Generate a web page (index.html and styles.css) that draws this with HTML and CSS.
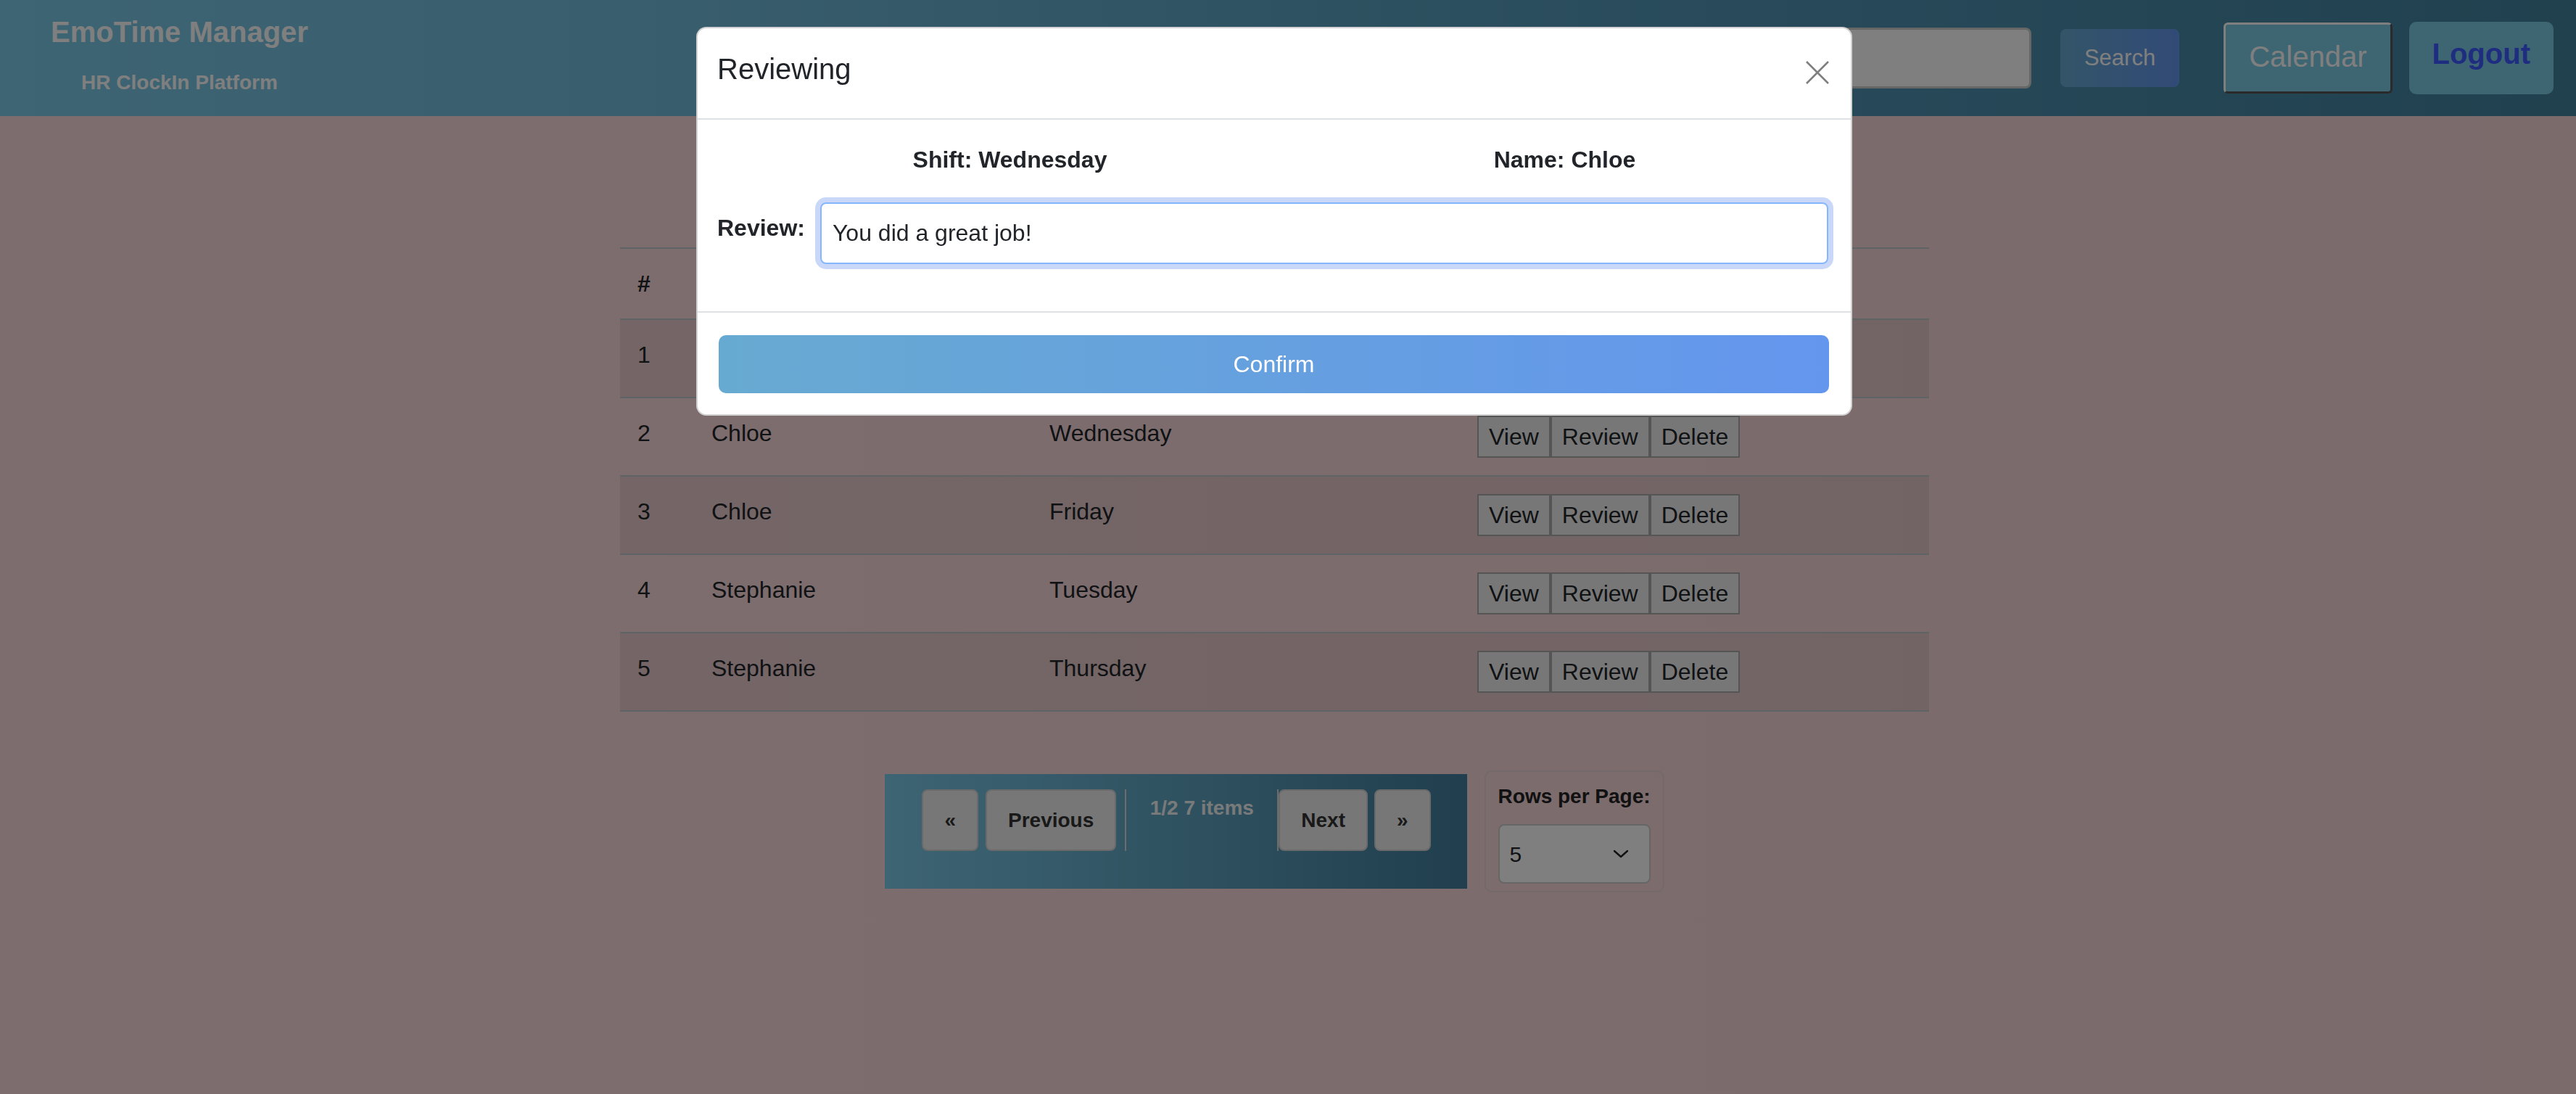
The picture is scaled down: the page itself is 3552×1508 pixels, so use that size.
FILE: index.html
```html
<!DOCTYPE html>
<html lang="en">
<head>
<meta charset="utf-8">
<title>EmoTime Manager</title>
<link rel="stylesheet" href="styles.css">
</head>
<body>
<header class="topbar">
  <div class="brand">
    <div class="brand-title">EmoTime Manager</div>
    <div class="brand-sub">HR ClockIn Platform</div>
  </div>
  <div class="nav-right">
    <input class="search-input" type="text" aria-label="Search">
    <button class="btn-search">Search</button>
    <button class="btn-calendar">Calendar</button>
    <button class="btn-logout">Logout</button>
  </div>
</header>

<main class="content">
  <div class="main">
    <table class="shifts">
      <colgroup>
        <col class="c-num"><col class="c-name"><col class="c-shift"><col class="c-act">
      </colgroup>
      <thead>
        <tr><th>#</th><th>Name</th><th>Shift</th><th>Actions</th></tr>
      </thead>
      <tbody>
        <tr><td>1</td><td>Chloe</td><td>Monday</td><td><div class="acts"><button class="act">View</button><button class="act">Review</button><button class="act">Delete</button></div></td></tr>
        <tr><td>2</td><td>Chloe</td><td>Wednesday</td><td><div class="acts"><button class="act">View</button><button class="act">Review</button><button class="act">Delete</button></div></td></tr>
        <tr><td>3</td><td>Chloe</td><td>Friday</td><td><div class="acts"><button class="act">View</button><button class="act">Review</button><button class="act">Delete</button></div></td></tr>
        <tr><td>4</td><td>Stephanie</td><td>Tuesday</td><td><div class="acts"><button class="act">View</button><button class="act">Review</button><button class="act">Delete</button></div></td></tr>
        <tr><td>5</td><td>Stephanie</td><td>Thursday</td><td><div class="acts"><button class="act">View</button><button class="act">Review</button><button class="act">Delete</button></div></td></tr>
      </tbody>
    </table>

    <div class="pager-row">
      <div class="pager">
        <button class="pg-btn pg-first">&laquo;</button>
        <button class="pg-btn pg-prev">Previous</button>
        <div class="pg-info">1/2 7 items</div>
        <button class="pg-btn pg-next">Next</button>
        <button class="pg-btn">&raquo;</button>
      </div>
      <div class="rows-box">
        <label class="rows-label" for="rows">Rows per Page:</label>
        <div class="select-wrap">
          <select id="rows" class="rows-select"><option>5</option><option>10</option></select>
          <svg class="chev" width="22" height="12" viewBox="0 0 22 12" aria-hidden="true"><polyline points="2,2 11,10 20,2" fill="none" stroke="#222" stroke-width="2.4" stroke-linecap="round" stroke-linejoin="round"/></svg>
        </div>
      </div>
    </div>
  </div>
</main>

<div class="backdrop"></div>
<div class="modal-layer">
  <div class="modal">
    <div class="modal-header">
      <h5 class="modal-title">Reviewing</h5>
      <button class="btn-close" aria-label="Close">
        <svg width="34" height="34" viewBox="0 0 34 34" aria-hidden="true"><path d="M2 2 L32 32 M32 2 L2 32" stroke="#000" stroke-opacity="0.5" stroke-width="2.6" fill="none"/></svg>
      </button>
    </div>
    <div class="modal-body">
      <div class="info-row">
        <div class="info-cell">Shift: Wednesday</div>
        <div class="info-cell">Name: Chloe</div>
      </div>
      <div class="review-row">
        <label class="review-label" for="review">Review:</label>
        <input id="review" class="review-input" type="text" value="You did a great job!">
      </div>
    </div>
    <div class="modal-footer">
      <button class="btn-confirm">Confirm</button>
    </div>
  </div>
</div>
</body>
</html>
```

FILE: styles.css
```css
* { box-sizing: border-box; }

html, body {
  margin: 0;
  padding: 0;
}

body {
  font-family: "Liberation Sans", Arial, sans-serif;
  color: #212529;
  background: linear-gradient(to right, #fcdbdd, #f6d6d7);
  min-height: 100vh;
}

button, input, select {
  font-family: "Liberation Sans", Arial, sans-serif;
}

/* ---------- top bar ---------- */
.topbar {
  height: 160px;
  display: flex;
  align-items: center;
  justify-content: space-between;
  padding: 0 31px 0 70px;
  background: linear-gradient(to right, #7ccae8 0%, #72bcda 25%, #5094b4 68%, #42829e 100%);
}

.brand {
  display: flex;
  flex-direction: column;
  align-items: center;
  color: #fff;
  font-weight: bold;
  align-self: flex-start;
  padding-top: 20px;
}

.brand-title {
  font-size: 40px;
  line-height: 48px;
}

.brand-sub {
  font-size: 28px;
  line-height: 31px;
  margin-top: 30px;
}

.nav-right {
  display: flex;
  align-items: center;
}

.search-input {
  width: 380px;
  height: 84px;
  border: 3px solid #cccccc;
  border-radius: 8px;
  background: #fff;
  margin-right: 40px;
}

.btn-search {
  height: 80px;
  padding: 0 33px;
  border: none;
  border-radius: 8px;
  background: linear-gradient(to right, #67aad1, #6496ee);
  color: #fff;
  font-size: 31px;
  margin-right: 61px;
}

.btn-calendar {
  height: 98px;
  padding: 0 32px 4px;
  border: 3px solid;
  border-color: #ffffff #555555 #555555 #ffffff;
  border-radius: 6px;
  background: #7ccce4;
  color: #fff;
  font-size: 40px;
  margin-right: 23px;
}

.btn-logout {
  height: 100px;
  padding: 0 32px 12px;
  border: none;
  border-radius: 10px;
  background: #7ccce4;
  color: #3c5aff;
  font-size: 40px;
  font-weight: bold;
}

/* ---------- main content ---------- */
.content {
  padding-right: 37px;
}

.main {
  width: 1805px;
  margin: 181px auto 0;
}

.shifts {
  width: 1805px;
  border-collapse: collapse;
  border-top: 2px solid #bcc8cc;
  font-size: 32px;
  line-height: 48px;
  color: #212529;
}

.c-num { width: 102px; }
.c-name { width: 466px; }
.c-shift { width: 590px; }
.c-act { width: 647px; }

.shifts th,
.shifts td {
  text-align: left;
  padding: 24px;
  border-bottom: 2px solid #bcc8cc;
  vertical-align: top;
}

.shifts th {
  font-weight: bold;
  vertical-align: bottom;
}

.shifts tbody tr:nth-child(odd) {
  background: rgba(0, 0, 0, 0.065);
}

.acts {
  display: flex;
}

.act {
  height: 58px;
  padding: 0 14px;
  border: 2px solid #aaaaaa;
  background: #eeeeee;
  color: #212529;
  font-size: 32px;
  margin: 0;
}

/* ---------- pagination ---------- */
.pager-row {
  margin-top: 81px;
  display: flex;
  justify-content: center;
  align-items: center;
  gap: 24px;
}

.pager {
  display: flex;
  align-items: stretch;
  padding: 21px 50px 52px 51px;
  background: linear-gradient(to right, #7ccae8, #427e9c);
}

.pg-btn {
  height: 85px;
  padding: 0 29px;
  border: 2px solid #d4d4d4;
  border-radius: 8px;
  background: #eeeeee;
  color: #333;
  font-size: 28px;
  font-weight: bold;
}

.pg-first { margin-right: 10px; }
.pg-prev { margin-right: 12px; }
.pg-next { margin-right: 9px; }

.pg-info {
  width: 212px;
  border-left: 2px solid #d8d8d8;
  border-right: 2px solid #d8d8d8;
  padding-top: 10px;
  text-align: center;
  font-size: 28px;
  line-height: 32px;
  font-weight: bold;
  color: #f2f4f5;
}

.rows-box {
  width: 248px;
  padding: 13px 17px 10px;
  border: 2px solid #e6d2d4;
  border-radius: 10px;
}

.rows-label {
  display: block;
  font-size: 28px;
  line-height: 42px;
  font-weight: bold;
  color: #222;
  margin-bottom: 17px;
  white-space: nowrap;
}

.select-wrap {
  position: relative;
}

.rows-select {
  display: block;
  width: 100%;
  height: 82px;
  border: 2px solid #cccccc;
  border-radius: 8px;
  background: #fff;
  padding: 0 0 0 14px;
  font-size: 30px;
  color: #212529;
  appearance: none;
  -webkit-appearance: none;
}

.chev {
  position: absolute;
  right: 30px;
  top: 35px;
  pointer-events: none;
}

/* ---------- modal ---------- */
.backdrop {
  position: fixed;
  inset: 0;
  background: rgba(0, 0, 0, 0.5);
}

.modal-layer {
  position: fixed;
  inset: 0;
  display: flex;
  justify-content: center;
  align-items: flex-start;
  padding: 37px 38px 0 0;
}

.modal {
  width: 1594px;
  background: #fff;
  border: 2px solid rgba(0, 0, 0, 0.175);
  border-radius: 14px;
  overflow: hidden;
}

.modal-header {
  display: flex;
  align-items: flex-start;
  justify-content: space-between;
  padding: 32px 29px 44px 27px;
  border-bottom: 2px solid #dee2e6;
}

.modal-title {
  margin: 0;
  font-size: 40px;
  line-height: 48px;
  font-weight: 400;
  color: #212529;
}

.btn-close {
  width: 34px;
  height: 34px;
  padding: 0;
  margin-top: 12px;
  border: none;
  background: none;
  display: flex;
}

.modal-body {
  padding: 31px 31px 32px 27px;
}

.info-row {
  display: grid;
  grid-template-columns: 765px 765px;
  margin-left: 21px;
  margin-right: -19px;
  margin-bottom: 35px;
  font-size: 32px;
  line-height: 48px;
  font-weight: bold;
  color: #212529;
}

.info-cell {
  text-align: center;
}

.review-row {
  display: flex;
  align-items: flex-start;
  gap: 21px;
  margin-bottom: 33px;
}

.review-label {
  font-size: 32px;
  line-height: 48px;
  font-weight: bold;
  padding-top: 11px;
  color: #212529;
  white-space: nowrap;
}

.review-input {
  flex: 1;
  height: 85px;
  border: 2px solid #86b7fe;
  border-radius: 8px;
  box-shadow: 0 0 0 7px #c9d8f8;
  padding: 0 15px;
  font-size: 32px;
  color: #212529;
  outline: none;
}

.modal-footer {
  border-top: 2px solid #dee2e6;
  padding: 31px 30px 29px 29px;
}

.btn-confirm {
  display: block;
  width: 100%;
  height: 80px;
  border: none;
  border-radius: 10px;
  background: linear-gradient(to right, #67aad1, #6496ee);
  color: #fff;
  font-size: 32px;
}
```
